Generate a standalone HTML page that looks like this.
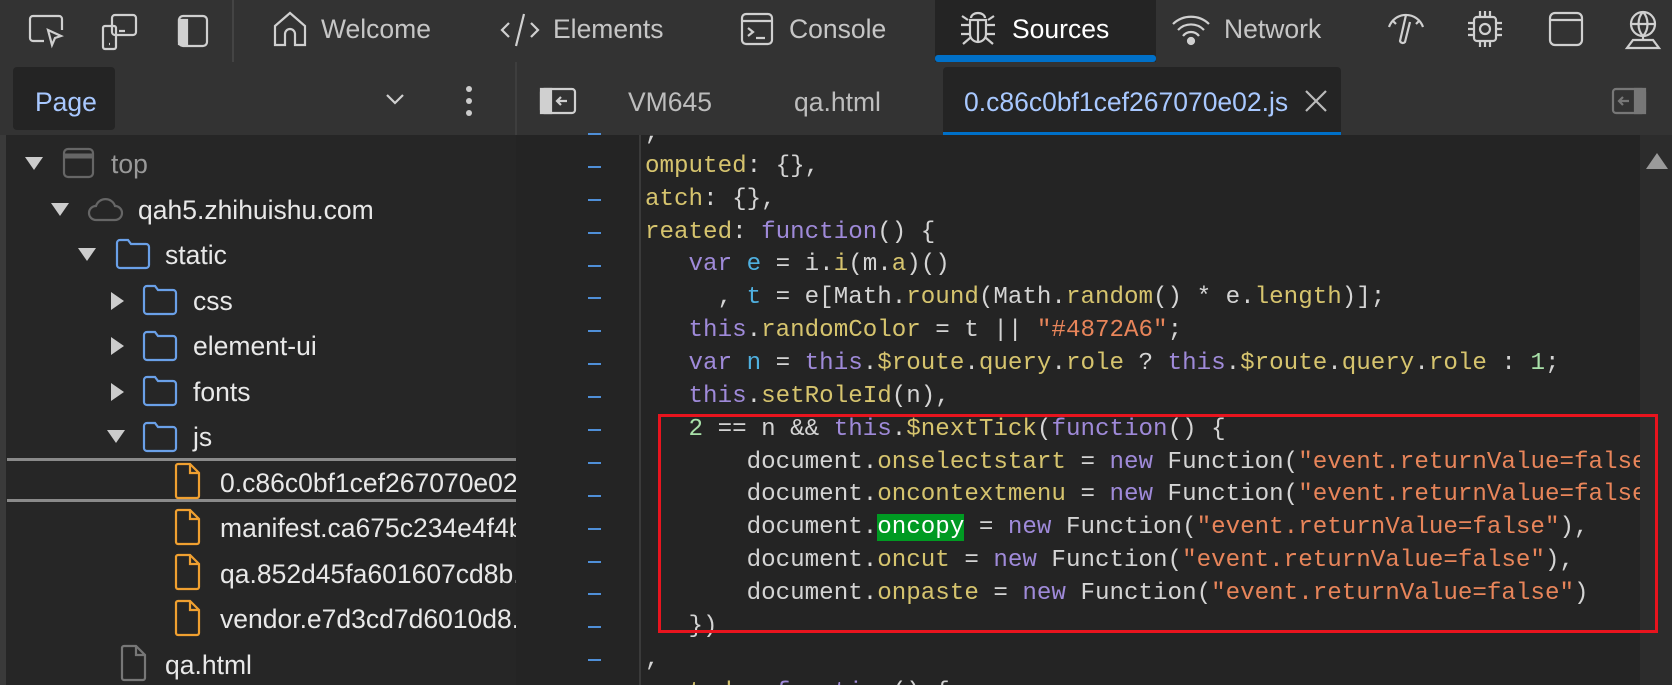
<!DOCTYPE html>
<html><head><meta charset="utf-8"><style>
*{margin:0;padding:0;box-sizing:border-box}
body{width:1672px;height:685px;background:#242424;overflow:hidden;position:relative;font-family:"Liberation Sans",sans-serif}
.abs{position:absolute}
.top{left:0;top:0;width:1672px;height:62px;background:#333}
.bar2{left:0;top:62px;width:1672px;height:73px;background:#333}
.tl{position:absolute;top:14px;font-size:26.5px;color:#c6c6c6;line-height:30px}
svg{position:absolute;fill:none;stroke:#d0d0d0;stroke-width:2.2}
.tree{left:0;top:135px;width:516px;height:550px;background:#262626;overflow:hidden}
.tr{position:absolute;font-size:26.5px;color:#e8e8e8;line-height:30px;white-space:nowrap}
.code{left:645px;top:135px;width:995px;height:550px;overflow:hidden}
.code pre{position:absolute;left:0;top:-17px;font-family:"Liberation Mono",monospace;font-size:24.2px;line-height:32.86px;color:#d4d4d4}
.y{color:#d6c46e}.p{color:#9f8ad9}.b{color:#4fb0e0}.s{color:#e8855a}.g{color:#a8e0a8}
.hl{background:#009a22;color:#fff}
.gut{left:516px;top:135px;width:125px;height:550px;background:#242424;border-right:2px solid #3a3a3a}
.ln{position:absolute;left:588px;width:13px;height:2px;background:#4f8fd8}
.b2{position:absolute;top:87px;font-size:26.5px;color:#bdbdbd}
</style></head><body>
<div class="abs top"></div>
<div class="abs bar2"></div>
<svg style="left:28px;top:14px" width="38" height="36" viewBox="0 0 38 36"><path d="M16 27H5a3 3 0 0 1-3-3V5a3 3 0 0 1 3-3h26a3 3 0 0 1 3 3v11"/><path d="M20 16l13 6-6 2-3 7z"/></svg>
<svg style="left:101px;top:13px" width="38" height="38" viewBox="0 0 38 38"><rect x="11" y="2" width="24" height="20" rx="3"/><rect x="2" y="13" width="13" height="23" rx="2"/><path d="M18 18h6M8 31h1"/></svg>
<svg style="left:177px;top:14px" width="32" height="34" viewBox="0 0 32 34"><rect x="2" y="2" width="28" height="30" rx="4"/><path d="M2 6h8v24H2z" fill="#d0d0d0"/></svg>
<div class="abs" style="left:232px;top:0;width:2px;height:62px;background:#444"></div>
<svg style="left:272px;top:10px" width="36" height="38" viewBox="0 0 36 38"><path d="M3 16L18 3l15 13v19H23V24a5 5 0 0 0-10 0v11H3z"/></svg>
<div class="tl" style="left:321px">Welcome</div>
<svg style="left:500px;top:12px" width="40" height="36" viewBox="0 0 40 36"><path d="M9 11L2 18l7 7M31 11l7 7-7 7M24 2L16 34"/></svg>
<div class="tl" style="left:553px">Elements</div>
<svg style="left:740px;top:12px" width="34" height="34" viewBox="0 0 34 34"><rect x="2" y="2" width="30" height="30" rx="4"/><path d="M2 9h30M8 16l5 4-5 4M16 26h9"/></svg>
<div class="tl" style="left:789px">Console</div>
<div class="abs" style="left:935px;top:0;width:221px;height:62px;background:#242424"></div>
<div class="abs" style="left:935px;top:55px;width:221px;height:7px;background:#0070c8;border-radius:3px"></div>
<svg style="left:958px;top:10px" width="40" height="38" viewBox="0 0 40 38"><path d="M13 8a7 5 0 0 1 14 0M12 10h16v14a8 8 0 0 1-16 0zM20 10v22M3 15h9M28 15h9M3 24h9M28 24h9M4 6l6 4M36 6l-6 4M5 34l7-6M35 34l-7-6"/></svg>
<div class="tl" style="left:1012px;color:#fff">Sources</div>
<svg style="left:1171px;top:12px" width="40" height="34" viewBox="0 0 40 34"><path d="M2 12a26 26 0 0 1 36 0M7 18a18 18 0 0 1 26 0M12 24a10 10 0 0 1 16 0"/><circle cx="20" cy="29" r="3" fill="#d0d0d0"/></svg>
<div class="tl" style="left:1224px">Network</div>
<svg style="left:1385px;top:11px" width="42" height="34" viewBox="0 0 42 34"><path d="M4 16a18 18 0 0 1 34 0M21 4l-6 26a3 3 0 0 0 5 1l5-20M8 10l3 3M34 10l-3 3"/></svg>
<svg style="left:1464px;top:9px" width="42" height="40" viewBox="0 0 42 40"><rect x="10" y="8" width="22" height="24" rx="3"/><circle cx="21" cy="20" r="5"/><path d="M16 2v6M21 2v6M26 2v6M16 32v6M21 32v6M26 32v6M4 14h6M4 20h6M4 26h6M32 14h6M32 20h6M32 26h6"/></svg>
<svg style="left:1548px;top:11px" width="36" height="36" viewBox="0 0 36 36"><rect x="2" y="2" width="32" height="32" rx="5"/><path d="M2 9h32"/></svg>
<svg style="left:1623px;top:10px" width="40" height="40" viewBox="0 0 40 40"><circle cx="20" cy="14" r="12"/><path d="M8 14h24M20 2c-6 6-6 18 0 24M20 2c6 6 6 18 0 24M20 26v4M4 38l6-8h20l6 8z"/></svg>
<div class="abs" style="left:13px;top:67px;width:102px;height:63px;background:#242424;border-radius:4px"></div>
<div class="b2" style="left:35px;color:#a8c8ff">Page</div>
<svg style="left:385px;top:92px" width="20" height="14" viewBox="0 0 20 14"><path d="M2 3l8 8 8-8"/></svg>
<div class="abs" style="left:466px;top:86px;width:6px;height:6px;border-radius:3px;background:#ccc"></div>
<div class="abs" style="left:466px;top:98px;width:6px;height:6px;border-radius:3px;background:#ccc"></div>
<div class="abs" style="left:466px;top:110px;width:6px;height:6px;border-radius:3px;background:#ccc"></div>
<div class="abs" style="left:515px;top:62px;width:2px;height:73px;background:#3e3e3e"></div>
<svg style="left:539px;top:87px" width="38" height="28" viewBox="0 0 38 28"><rect x="2" y="2" width="34" height="24" rx="3"/><path d="M2 2h10v24H2z" fill="#d0d0d0"/><path d="M28 14h-10M22 10l-4 4 4 4"/></svg>
<div class="b2" style="left:628px">VM645</div>
<div class="b2" style="left:794px">qa.html</div>
<div class="abs" style="left:943px;top:67px;width:398px;height:68px;background:#242424;border-radius:4px 4px 0 0;border-bottom:3px solid #0070c8"></div>
<div class="b2" style="left:964px;color:#a8c8ff">0.c86c0bf1cef267070e02.js</div>
<svg style="left:1304px;top:89px" width="24" height="24" viewBox="0 0 24 24"><path d="M2 2l20 20M22 2L2 22" stroke="#bbb"/></svg>
<svg style="left:1611px;top:87px" width="36" height="28" viewBox="0 0 36 28"><rect x="2" y="2" width="32" height="24" rx="3" stroke="#777"/><path d="M24 2h10v24H24z" fill="#777" stroke="#777"/><path d="M18 14H8M12 10l-4 4 4 4" stroke="#777"/></svg>
<div class="abs tree">
<div class="abs" style="left:0;top:0;width:6px;height:550px;background:#3a3a3a"></div>
<div class="abs" style="left:7px;top:323px;width:509px;height:3px;background:#8a8a8a"></div>
<div class="abs" style="left:7px;top:364px;width:509px;height:3px;background:#8a8a8a"></div>
</div>
<div class="abs" style="left:25px;top:157px;border-left:9px solid transparent;border-right:9px solid transparent;border-top:13px solid #ccc"></div>
<div class="abs" style="left:51px;top:203px;border-left:9px solid transparent;border-right:9px solid transparent;border-top:13px solid #ccc"></div>
<div class="abs" style="left:78px;top:248px;border-left:9px solid transparent;border-right:9px solid transparent;border-top:13px solid #ccc"></div>
<div class="abs" style="left:111px;top:292px;border-top:9px solid transparent;border-bottom:9px solid transparent;border-left:13px solid #ccc"></div>
<div class="abs" style="left:111px;top:337px;border-top:9px solid transparent;border-bottom:9px solid transparent;border-left:13px solid #ccc"></div>
<div class="abs" style="left:111px;top:383px;border-top:9px solid transparent;border-bottom:9px solid transparent;border-left:13px solid #ccc"></div>
<div class="abs" style="left:107px;top:430px;border-left:9px solid transparent;border-right:9px solid transparent;border-top:13px solid #ccc"></div>
<svg style="left:62px;top:147px" width="34" height="34" viewBox="0 0 34 34"><rect x="2" y="2" width="29" height="28" rx="4" stroke="#666"/><path d="M2 9h29" stroke="#666" stroke-width="5"/></svg>
<svg style="left:87px;top:197px" width="38" height="26" viewBox="0 0 38 26"><path d="M9 23a7 7 0 0 1 0-14 10 10 0 0 1 19 0 7 7 0 0 1 0 14z" stroke="#666"/></svg>
<svg style="left:115px;top:237px" width="38" height="34" viewBox="0 0 38 34"><path d="M2 6a3 3 0 0 1 3-3h8l3 4h15a3 3 0 0 1 3 3v18a3 3 0 0 1-3 3H5a3 3 0 0 1-3-3z" stroke="#6aa0e8"/></svg>
<svg style="left:142px;top:283px" width="38" height="34" viewBox="0 0 38 34"><path d="M2 6a3 3 0 0 1 3-3h8l3 4h15a3 3 0 0 1 3 3v18a3 3 0 0 1-3 3H5a3 3 0 0 1-3-3z" stroke="#6aa0e8"/></svg>
<svg style="left:142px;top:329px" width="38" height="34" viewBox="0 0 38 34"><path d="M2 6a3 3 0 0 1 3-3h8l3 4h15a3 3 0 0 1 3 3v18a3 3 0 0 1-3 3H5a3 3 0 0 1-3-3z" stroke="#6aa0e8"/></svg>
<svg style="left:142px;top:374px" width="38" height="34" viewBox="0 0 38 34"><path d="M2 6a3 3 0 0 1 3-3h8l3 4h15a3 3 0 0 1 3 3v18a3 3 0 0 1-3 3H5a3 3 0 0 1-3-3z" stroke="#6aa0e8"/></svg>
<svg style="left:142px;top:420px" width="38" height="34" viewBox="0 0 38 34"><path d="M2 6a3 3 0 0 1 3-3h8l3 4h15a3 3 0 0 1 3 3v18a3 3 0 0 1-3 3H5a3 3 0 0 1-3-3z" stroke="#6aa0e8"/></svg>
<svg style="left:173px;top:462px" width="30" height="38" viewBox="0 0 30 38"><path d="M3 4a2 2 0 0 1 2-2h12l9 9v23a2 2 0 0 1-2 2H5a2 2 0 0 1-2-2zM17 2v9h9" stroke="#f0a030"/></svg>
<svg style="left:173px;top:508px" width="30" height="38" viewBox="0 0 30 38"><path d="M3 4a2 2 0 0 1 2-2h12l9 9v23a2 2 0 0 1-2 2H5a2 2 0 0 1-2-2zM17 2v9h9" stroke="#f0a030"/></svg>
<svg style="left:173px;top:553px" width="30" height="38" viewBox="0 0 30 38"><path d="M3 4a2 2 0 0 1 2-2h12l9 9v23a2 2 0 0 1-2 2H5a2 2 0 0 1-2-2zM17 2v9h9" stroke="#f0a030"/></svg>
<svg style="left:173px;top:599px" width="30" height="38" viewBox="0 0 30 38"><path d="M3 4a2 2 0 0 1 2-2h12l9 9v23a2 2 0 0 1-2 2H5a2 2 0 0 1-2-2zM17 2v9h9" stroke="#f0a030"/></svg>
<svg style="left:119px;top:644px" width="30" height="38" viewBox="0 0 30 38"><path d="M3 4a2 2 0 0 1 2-2h12l9 9v23a2 2 0 0 1-2 2H5a2 2 0 0 1-2-2zM17 2v9h9" stroke="#777"/></svg>
<div class="tr" style="left:111px;top:149px;color:#999">top</div>
<div class="tr" style="left:138px;top:195px">qah5.zhihuishu.com</div>
<div class="tr" style="left:165px;top:240px">static</div>
<div class="tr" style="left:193px;top:286px">css</div>
<div class="tr" style="left:193px;top:331px">element-ui</div>
<div class="tr" style="left:193px;top:377px">fonts</div>
<div class="tr" style="left:193px;top:422px">js</div>
<div class="tr" style="left:220px;top:468px;width:296px;overflow:hidden">0.c86c0bf1cef267070e02.js</div>
<div class="tr" style="left:220px;top:513px;width:296px;overflow:hidden">manifest.ca675c234e4f4b.js</div>
<div class="tr" style="left:220px;top:559px;width:296px;overflow:hidden">qa.852d45fa601607cd8b.js</div>
<div class="tr" style="left:220px;top:604px;width:296px;overflow:hidden">vendor.e7d3cd7d6010d8.js</div>
<div class="tr" style="left:165px;top:650px">qa.html</div>
<div class="abs gut"></div>
<div class="ln" style="top:133px"></div><div class="ln" style="top:166px"></div><div class="ln" style="top:199px"></div><div class="ln" style="top:232px"></div><div class="ln" style="top:265px"></div><div class="ln" style="top:297px"></div><div class="ln" style="top:330px"></div><div class="ln" style="top:363px"></div><div class="ln" style="top:396px"></div><div class="ln" style="top:429px"></div><div class="ln" style="top:462px"></div><div class="ln" style="top:495px"></div><div class="ln" style="top:528px"></div><div class="ln" style="top:561px"></div><div class="ln" style="top:593px"></div><div class="ln" style="top:626px"></div><div class="ln" style="top:659px"></div>
<div class="abs code"><pre>,
<span class="y">omputed</span>: {},
<span class="y">atch</span>: {},
<span class="y">reated</span>: <span class="p">function</span>() {
   <span class="p">var</span> <span class="b">e</span> = i.<span class="y">i</span>(m.<span class="y">a</span>)()
     , <span class="b">t</span> = e[Math.<span class="y">round</span>(Math.<span class="y">random</span>() * e.<span class="y">length</span>)];
   <span class="p">this</span>.<span class="y">randomColor</span> = t || <span class="s">"#4872A6"</span>;
   <span class="p">var</span> <span class="b">n</span> = <span class="p">this</span>.<span class="y">$route</span>.<span class="y">query</span>.<span class="y">role</span> ? <span class="p">this</span>.<span class="y">$route</span>.<span class="y">query</span>.<span class="y">role</span> : <span class="g">1</span>;
   <span class="p">this</span>.<span class="y">setRoleId</span>(n),
   <span class="g">2</span> == n &amp;&amp; <span class="p">this</span>.<span class="y">$nextTick</span>(<span class="p">function</span>() {
       document.<span class="y">onselectstart</span> = <span class="p">new</span> Function(<span class="s">"event.returnValue=false"</span>),
       document.<span class="y">oncontextmenu</span> = <span class="p">new</span> Function(<span class="s">"event.returnValue=false"</span>),
       document.<span class="hl">oncopy</span> = <span class="p">new</span> Function(<span class="s">"event.returnValue=false"</span>),
       document.<span class="y">oncut</span> = <span class="p">new</span> Function(<span class="s">"event.returnValue=false"</span>),
       document.<span class="y">onpaste</span> = <span class="p">new</span> Function(<span class="s">"event.returnValue=false"</span>)
   })
,
   <span class="y">todo</span>: <span class="p">function</span>() {
</pre></div>
<div class="abs" style="left:1640px;top:135px;width:32px;height:550px;background:#2c2c2c"></div>
<div class="abs" style="left:1646px;top:153px;border-left:11px solid transparent;border-right:11px solid transparent;border-bottom:16px solid #9a9a9a"></div>
<div class="abs" style="left:658px;top:414px;width:1000px;height:219px;border:3px solid #e8141e"></div>
</body></html>
